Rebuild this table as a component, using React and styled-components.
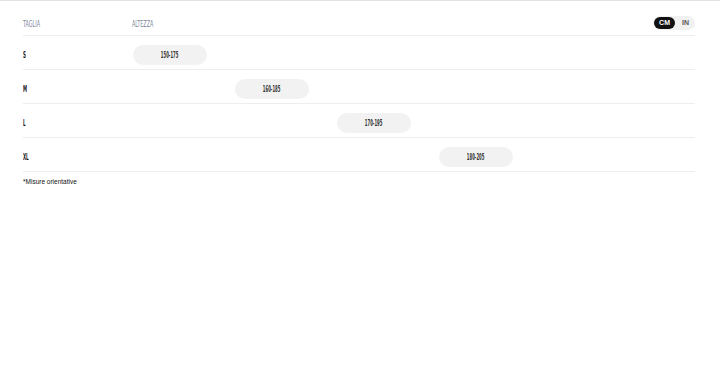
import styled, { createGlobalStyle } from "styled-components";

const GlobalStyle = createGlobalStyle`
  body {
    margin: 0;
    background: #fff;
    border-top: 1px solid #e2e2e2;
    font-family: "Liberation Sans", Arial, sans-serif;
  }
`;

const Container = styled.div`
  padding: 0 25px 0 23px;
`;

const Table = styled.div``;

const HeaderRow = styled.div`
  display: grid;
  grid-template-columns: 109px 1fr auto;
  align-items: center;
  height: 22px;
  padding-top: 12px;
  border-bottom: 1px solid #eeeeee;
`;

const Condensed = styled.span`
  font-family: "Liberation Sans Narrow", "DejaVu Sans Condensed", "Liberation Sans", sans-serif;
  display: inline-block;
  transform-origin: left center;
  white-space: nowrap;
`;

const HeadLabel = styled(Condensed)`
  font-size: 9px;
  color: #7a8499;
  text-transform: uppercase;
  transform: scaleX(0.6);
`;

const Toggle = styled.div`
  display: flex;
  align-items: center;
  background: #f1f1f1;
  border-radius: 8px;
  padding: 1px;
  gap: 2px;
  margin-top: -2px;
`;

const ToggleOption = styled.span`
  font-family: "Liberation Sans", Arial, sans-serif;
  font-size: 7px;
  font-weight: 700;
  line-height: 12px;
  padding: 0 5px;
  border-radius: 6px;
  background: ${(p) => (p.$active ? "#111" : "transparent")};
  color: ${(p) => (p.$active ? "#fff" : "#555")};
`;

const Row = styled.div`
  display: grid;
  grid-template-columns: 110px 1fr;
  align-items: center;
  height: 29px;
  padding-top: 4px;
  border-bottom: 1px solid #eeeeee;
`;

const SizeLabel = styled(Condensed)`
  font-size: 9px;
  font-weight: 700;
  color: #1a1a1a;
  transform: scaleX(0.5);
`;

const Track = styled.div`
  display: flex;
  align-items: center;
`;

const Pill = styled.div`
  width: 74px;
  height: 20px;
  border-radius: 10px;
  background: #f2f2f2;
  display: flex;
  align-items: center;
  justify-content: center;
`;

const PillText = styled(Condensed)`
  font-size: 9px;
  font-weight: 700;
  color: #333;
  transform: scaleX(0.47);
  transform-origin: center;
`;

const Note = styled.p`
  margin: 6px 0 0;
  font-family: "Liberation Sans", Arial, sans-serif;
  font-size: 6.5px;
  color: #111;
`;

const sizes = [
  { label: "S", min: 150, max: 175 },
  { label: "M", min: 160, max: 185 },
  { label: "L", min: 170, max: 195 },
  { label: "XL", min: 180, max: 205 },
];

const App = () => {
  return (
    <Container>
      <GlobalStyle />
      <Table>
        <HeaderRow>
          <HeadLabel>Taglia</HeadLabel>
          <HeadLabel>Altezza</HeadLabel>
          <Toggle>
            <ToggleOption $active>CM</ToggleOption>
            <ToggleOption>IN</ToggleOption>
          </Toggle>
        </HeaderRow>
        {sizes.map((s) => (
          <Row key={s.label}>
            <SizeLabel>{s.label}</SizeLabel>
            <Track>
              <Pill style={{ marginLeft: `${((s.min - 150) / 10) * 18.15}%` }}>
                <PillText>
                  {s.min}-{s.max}
                </PillText>
              </Pill>
            </Track>
          </Row>
        ))}
      </Table>
      <Note>*Misure orientative</Note>
    </Container>
  );
};

export default App;
